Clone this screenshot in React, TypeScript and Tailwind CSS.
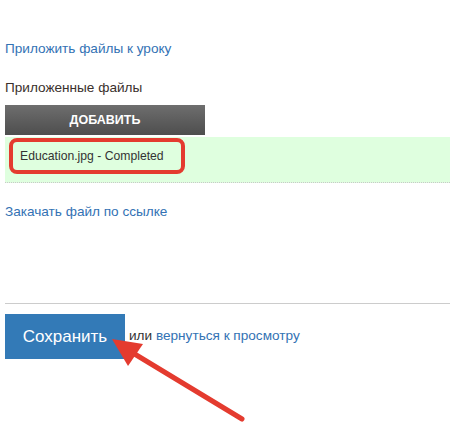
import React from 'react';

export default function App() {
  return (
    <div className="relative w-[450px] h-[426px] bg-white font-['Liberation_Sans',Arial,sans-serif] overflow-hidden">
      <div className="pl-[5px] pt-[40px]">
        <a href="#" className="block text-[13.6px] leading-[18px] text-[#3372b4]">
          Приложить файлы к уроку
        </a>

        <div className="mt-[21px] text-[13.6px] leading-[18px] text-[#3a302c]">Приложенные файлы</div>

        <button className="mt-[8px] w-[200px] h-[30px] bg-gradient-to-b from-[#6e6e6e] to-[#4e4e4e] text-white text-[12.5px] font-bold uppercase">
          Добавить
        </button>

        <div className="mt-[2px] h-[46px] bg-[#dfffdf] border-b border-dotted border-[#c8c8c8] pl-[4px] pt-[1px]">
          <div className="w-[176px] h-[36px] border-[4px] border-[#e43b2f] rounded-[8px] flex items-center pl-[7px]">
            <span className="text-[12.2px] text-[#333]">Education.jpg - Completed</span>
          </div>
        </div>

        <a href="#" className="block mt-[20px] text-[13.6px] leading-[18px] text-[#3372b4]">
          Закачать файл по ссылке
        </a>

        <div className="mt-[82px] h-px bg-[#cccccc]" />

        <div className="mt-[10px] flex items-center">
          <button className="w-[120px] h-[45px] bg-[#337ab7] text-white text-[17px]">Сохранить</button>
          <span className="ml-[4px] text-[13.6px] text-[#333]">
            или <a href="#" className="text-[#3372b4]">вернуться к просмотру</a>
          </span>
        </div>
      </div>

      <svg className="absolute left-0 top-0" width="450" height="426" viewBox="0 0 450 426">
        <line x1="242" y1="419" x2="128" y2="350" stroke="#e43b2f" strokeWidth="5" strokeLinecap="round" />
        <polygon points="112,339 143,344 128,366" fill="#e43b2f" />
      </svg>
    </div>
  );
}
